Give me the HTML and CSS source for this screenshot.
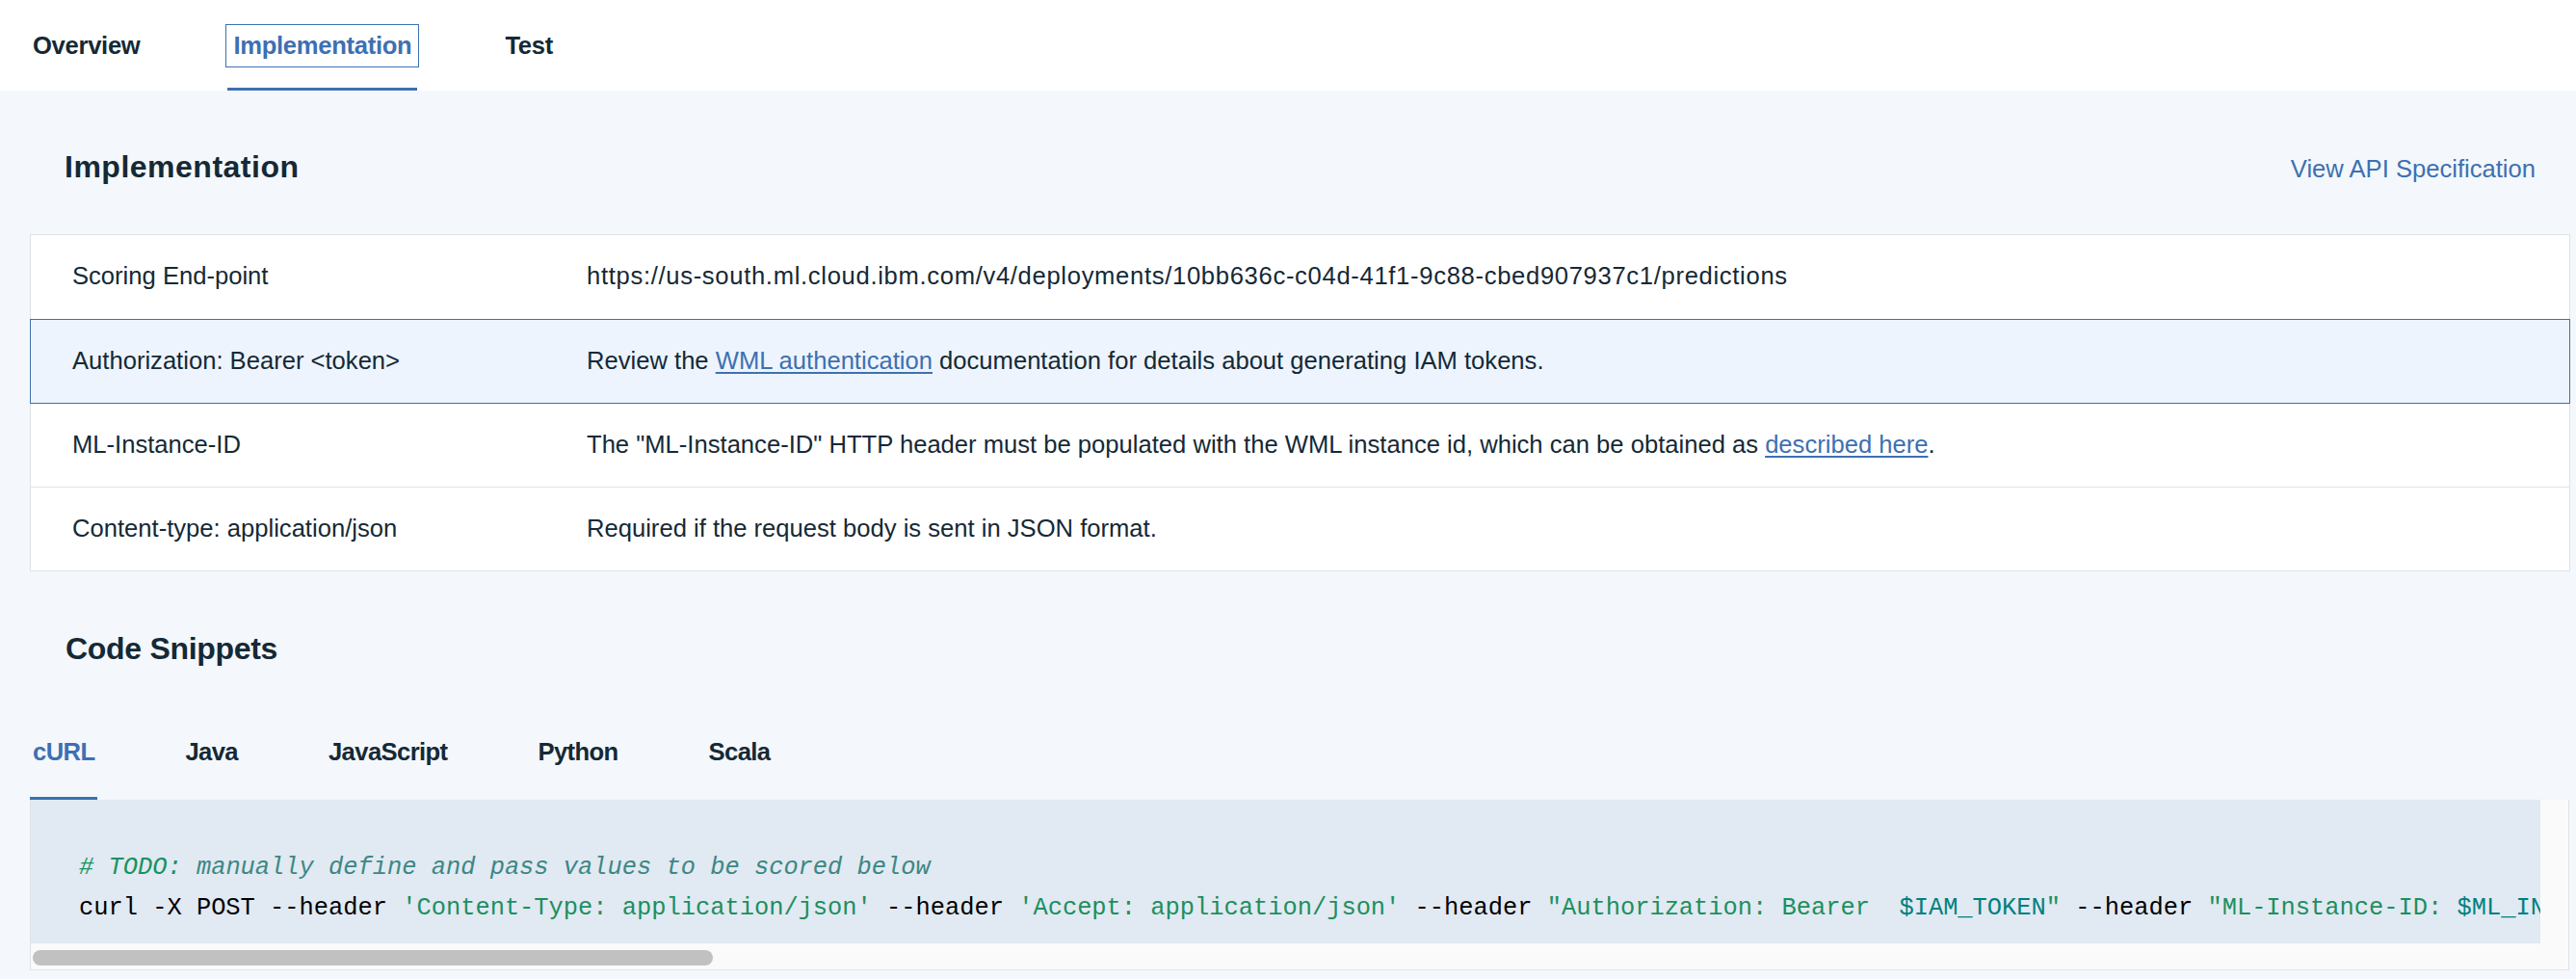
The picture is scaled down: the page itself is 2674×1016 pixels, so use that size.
FILE: index.html
```
<!DOCTYPE html>
<html lang="en">
<head>
<meta charset="utf-8">
<title>Implementation</title>
<link rel="stylesheet" href="styles.css">
</head>
<body>
<header class="nav">
  <div class="nav-tab"><span class="nav-label">Overview</span></div>
  <div class="nav-tab active"><span class="nav-label">Implementation</span></div>
  <div class="nav-tab"><span class="nav-label">Test</span></div>
</header>
<main class="main">
  <div class="section-head">
    <h2 class="section-title">Implementation</h2>
    <a class="spec-link" href="#">View API Specification</a>
  </div>
  <div class="table">
    <div class="row">
      <div class="cell key">Scoring End-point</div>
      <div class="cell url">https://us-south.ml.cloud.ibm.com/v4/deployments/10bb636c-c04d-41f1-9c88-cbed907937c1/predictions</div>
    </div>
    <div class="row selected">
      <div class="cell key">Authorization: Bearer &lt;token&gt;</div>
      <div class="cell">Review the <a class="link" href="#">WML authentication</a> documentation for details about generating IAM tokens.</div>
    </div>
    <div class="row">
      <div class="cell key">ML-Instance-ID</div>
      <div class="cell">The "ML-Instance-ID" HTTP header must be populated with the WML instance id, which can be obtained as <a class="link" href="#">described here</a>.</div>
    </div>
    <div class="row">
      <div class="cell key">Content-type: application/json</div>
      <div class="cell">Required if the request body is sent in JSON format.</div>
    </div>
  </div>
  <h2 class="section-title snippets-title">Code Snippets</h2>
  <div class="code-tabs">
    <div class="code-tab active">cURL</div>
    <div class="code-tab">Java</div>
    <div class="code-tab">JavaScript</div>
    <div class="code-tab">Python</div>
    <div class="code-tab">Scala</div>
  </div>
  <div class="code-box">
    <pre class="code"><span class="c-todo"># TODO:</span><span class="c-comment"> manually define and pass values to be scored below</span>
curl -X POST --header <span class="c-str">'Content-Type: application/json'</span> --header <span class="c-str">'Accept: application/json'</span> --header <span class="c-str">"Authorization: Bearer  <span class="c-var">$IAM_TOKEN</span>"</span> --header <span class="c-str">"ML-Instance-ID: <span class="c-var">$ML_INSTANCE_ID</span>"</span> -d <span class="c-str">'{"input_data": [{"fields": [$ARRAY_OF_INPUT_FIELDS],"values": [$ARRAY_OF_VALUES_TO_BE_SCORED, $ANOTHER_ARRAY_OF_VALUES_TO_BE_SCORED]}]}'</span> https://us-south.ml.cloud.ibm.com/v4/deployments/10bb636c-c04d-41f1-9c88-cbed907937c1/predictions</pre>
    <div class="vtrack"></div>
    <div class="htrack"><div class="thumb"></div></div>
  </div>
</main>
</body>
</html>
```
FILE: styles.css
```
* { box-sizing: border-box; }
html, body { margin: 0; padding: 0; }
body {
  background: #f4f7fb;
  font-family: "Liberation Sans", Arial, sans-serif;
  color: #152935;
  font-size: 25.6px;
  width: 2674px;
  height: 1016px;
  overflow: hidden;
}

/* top navigation */
.nav {
  display: flex;
  gap: 85px;
  padding-left: 28px;
  height: 94px;
  background: #ffffff;
}
.nav-tab {
  height: 94px;
  padding-top: 25px;
  border-bottom: 3px solid transparent;
  font-weight: 700;
  letter-spacing: -0.3px;
}
.nav-tab.active {
  border-bottom-color: #3d70b2;
  color: #3d70b2;
}
.nav-label {
  display: block;
  height: 45px;
  line-height: 43px;
  padding: 0 7px;
  border: 1px solid transparent;
  margin: 0 -2px;
}
.nav-tab.active .nav-label { border-color: #3d70b2; }

/* main */
.main {
  padding: 0 6px 0 31px;
}
.section-head {
  display: flex;
  justify-content: space-between;
  align-items: baseline;
  padding: 59px 36px 0 36px;
  height: 149px;
}
.section-title {
  margin: 0;
  font-size: 32px;
  line-height: 40px;
  font-weight: 700;
  color: #152935;
}
.section-head .section-title { letter-spacing: 0.5px; }
.spec-link {
  color: #3d70b2;
  text-decoration: none;
  font-size: 25.6px;
}

.table {
  background: #ffffff;
  border: 1px solid #dfe3e6;
}
.row {
  display: grid;
  grid-template-columns: 534px 1fr;
  height: 87px;
  border-top: 1px solid #dfe3e6;
  align-items: center;
}
.row:first-child { border-top: none; height: 87px; }
.row.selected {
  position: relative;
  z-index: 1;
  background: #edf4fd;
  border-top-color: #3d70b2;
  box-shadow: 0 1px 0 #3d70b2, -1px 0 0 #3d70b2, 1px 0 0 #3d70b2, -1px 1px 0 #3d70b2, 1px 1px 0 #3d70b2;
}
.cell {
  padding-left: 43px;
  padding-bottom: 2px;
  white-space: nowrap;
}
.cell.url { letter-spacing: 0.68px; }
.link {
  color: #3d70b2;
  text-decoration: underline;
  text-underline-offset: 3px;
}

.snippets-title {
  padding: 60px 0 0 37px;
  letter-spacing: -0.3px;
}
.code-tabs {
  display: flex;
  gap: 88px;
  margin-top: 48px;
}
.code-tab {
  height: 89px;
  padding: 21px 3px 0 3px;
  line-height: 36px;
  font-weight: 700;
  letter-spacing: -0.6px;
  border-bottom: 3px solid transparent;
}
.code-tab.active {
  color: #3d70b2;
  border-bottom-color: #3d70b2;
}

.code-box {
  display: grid;
  grid-template-columns: 1fr 29px;
  grid-template-rows: 149px 27px;
  width: 2636px;
  border: 1px solid #dfe3e6;
  border-top: none;
  background: #fafafa;
}
.code {
  grid-column: 1;
  grid-row: 1;
  margin: 0;
  padding: 50px 0 0 50px;
  background: #e1e9f2;
  font-family: "Liberation Mono", "Courier New", monospace;
  font-size: 25.4px;
  line-height: 42px;
  color: #000000;
  white-space: pre;
  overflow: hidden;
}
.vtrack {
  grid-column: 2;
  grid-row: 1 / 3;
  background: #fafafa;
}
.htrack {
  grid-column: 1;
  grid-row: 2;
  background: #fafafa;
  padding: 7px 0 0 2px;
}
.thumb {
  width: 706px;
  height: 16px;
  border-radius: 8px;
  background: #c1c1c1;
}
.c-todo { color: #17935d; font-style: italic; }
.c-comment { color: #3d8784; font-style: italic; }
.c-str { color: #1c8f5f; }
.c-var { color: #00807f; }
```
